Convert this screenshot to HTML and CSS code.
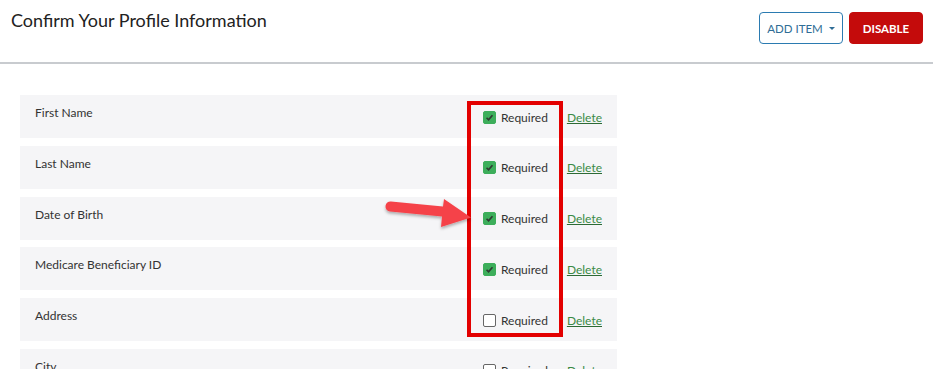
FILE: index.html
```html
<!DOCTYPE html>
<html>
<head>
<meta charset="utf-8">
<link rel="stylesheet" href="styles.css">
</head>
<body>
<header class="header">
  <h1 class="title">Confirm Your Profile Information</h1>
  <div class="actions">
    <button class="btn btn-outline">ADD ITEM <span class="caret"></span></button>
    <button class="btn btn-danger">DISABLE</button>
  </div>
</header>
<main class="content">
  <div class="list">
    <div class="row"><span class="label">First Name</span><div class="controls"><span class="check on"><svg viewBox="0 0 13 13"><path d="M3 6.8 L5.4 9.2 L10 3.8" /></svg></span><span class="req">Required</span><a class="del" href="#">Delete</a></div></div>
    <div class="row"><span class="label">Last Name</span><div class="controls"><span class="check on"><svg viewBox="0 0 13 13"><path d="M3 6.8 L5.4 9.2 L10 3.8" /></svg></span><span class="req">Required</span><a class="del" href="#">Delete</a></div></div>
    <div class="row"><span class="label">Date of Birth</span><div class="controls"><span class="check on"><svg viewBox="0 0 13 13"><path d="M3 6.8 L5.4 9.2 L10 3.8" /></svg></span><span class="req">Required</span><a class="del" href="#">Delete</a></div></div>
    <div class="row"><span class="label">Medicare Beneficiary ID</span><div class="controls"><span class="check on"><svg viewBox="0 0 13 13"><path d="M3 6.8 L5.4 9.2 L10 3.8" /></svg></span><span class="req">Required</span><a class="del" href="#">Delete</a></div></div>
    <div class="row"><span class="label">Address</span><div class="controls"><span class="check"></span><span class="req">Required</span><a class="del" href="#">Delete</a></div></div>
    <div class="row"><span class="label">City</span><div class="controls"><span class="check"></span><span class="req">Required</span><a class="del" href="#">Delete</a></div></div>
    <div class="highlight"></div>
    <svg class="arrow" width="100" height="40" viewBox="0 0 100 40">
      <defs>
        <filter id="sh" x="-20%" y="-20%" width="140%" height="160%">
          <feDropShadow dx="0" dy="2" stdDeviation="1.5" flood-color="#000" flood-opacity="0.3"/>
        </filter>
      </defs>
      <path filter="url(#sh)" fill="#f5434a" d="M11 5.5 L63 10.5 L64 3 L91 21.5 L61 31 L62 20.5 L10 15.5 A5 5 0 0 1 11 5.5 Z"/>
    </svg>
  </div>
</main>
</body>
</html>
```

FILE: styles.css
```css
html, body {
  margin: 0;
  padding: 0;
  background: #ffffff;
  font-family: "Lato", "Open Sans", sans-serif;
  color: #333;
  overflow: hidden;
}

.header {
  height: 62px;
  border-bottom: 2px solid #c8cbcf;
  display: flex;
  justify-content: space-between;
  align-items: flex-start;
  padding: 0 10px 0 11px;
}

.title {
  margin: 9px 0 0 0;
  font-size: 18px;
  font-weight: 400;
  color: #222;
  line-height: 22px;
}

.actions {
  display: flex;
  gap: 6px;
  margin-top: 12px;
}

.btn {
  height: 32px;
  border-radius: 4px;
  font-family: inherit;
  font-size: 11.5px;
  padding: 0;
  cursor: pointer;
  display: flex;
  align-items: center;
  gap: 6px;
  white-space: nowrap;
  box-sizing: border-box;
}

.btn-outline {
  width: 84px;
  background: #fff;
  border: 1px solid #2b7bb1;
  color: #2f6d96;
  justify-content: center;
}

.caret {
  width: 0;
  height: 0;
  border-left: 3px solid transparent;
  border-right: 3px solid transparent;
  border-top: 3.5px solid #2f6d96;
}

.btn-danger {
  width: 74px;
  background: #c40b0b;
  border: 1px solid #c40b0b;
  color: #fff;
  font-weight: 700;
  justify-content: center;
}

.content {
  padding: 31px 0 0 20px;
}

.list {
  position: relative;
  width: 597px;
  display: flex;
  flex-direction: column;
  gap: 7.8px;
}

.row {
  height: 43px;
  flex-shrink: 0;
  background: #f5f5f7;
  display: flex;
  justify-content: space-between;
  align-items: center;
  padding: 0 15px;
  box-sizing: border-box;
}

.label {
  align-self: flex-start;
  margin-top: 10px;
  font-size: 12px;
  line-height: 16px;
  color: #333;
}

.controls {
  display: flex;
  align-items: center;
  margin-top: 1px;
}

.check {
  width: 13px;
  height: 13px;
  box-sizing: border-box;
  border: 1px solid #666;
  border-radius: 2px;
  background: #fff;
  display: inline-flex;
}

.check.on {
  background: #3dae5b;
  border-color: #3dae5b;
}

.check svg {
  width: 11px;
  height: 11px;
}

.check svg path {
  fill: none;
  stroke: #2f3a33;
  stroke-width: 2;
}

.req {
  margin-left: 5px;
  font-size: 12px;
  color: #333;
}

.del {
  margin-left: 19px;
  font-size: 12px;
  color: #3a8a45;
  text-decoration: underline;
  text-decoration-color: #2d6b35;
}

.highlight {
  position: absolute;
  left: 447px;
  top: 6px;
  width: 96px;
  height: 236px;
  box-sizing: border-box;
  border: 4px solid #e30000;
}

.arrow {
  position: absolute;
  left: 360px;
  top: 101px;
}
```
